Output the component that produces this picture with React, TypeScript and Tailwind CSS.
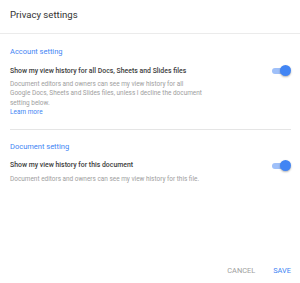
function Toggle() {
    return (
        <div className="relative w-[19px] h-[11px] flex-shrink-0">
            <div className="absolute left-0 right-[1px] top-[3px] h-[6px] rounded-full bg-[#9fc0f9]" />
            <div className="absolute right-0 top-0 w-[11px] h-[11px] rounded-full bg-[#4285f4] shadow-[0_1px_2px_rgba(0,0,0,0.3)]" />
        </div>
    );
}

interface SettingProps {
    heading: string;
    label: string;
    lines: string[];
    learnMore?: boolean;
}

function SettingSection({ heading, label, lines, learnMore }: SettingProps) {
    return (
        <div className="flex flex-col">
            <div className="text-[7.5px] leading-[10px] text-[#4285f4]">{heading}</div>
            <div className="flex items-center justify-between mt-[8px]">
                <div className="text-[6.9px] leading-[10px] font-medium text-[#3c3c3c]">{label}</div>
                <Toggle />
            </div>
            <div className="mt-[4px] text-[6.45px] leading-[9.4px] text-[#9e9e9e]">
                {lines.map((line) => (
                    <div key={line} className="whitespace-nowrap">{line}</div>
                ))}
                {learnMore && <div className="text-[#4285f4]">Learn more</div>}
            </div>
        </div>
    );
}

export default function App() {
    return (
        <div className="w-[300px] h-[283px] bg-white flex flex-col font-['Roboto',sans-serif]">
            <div className="h-[34px] border-b border-[#ebebeb] px-[10px] pt-[9px]">
                <h1 className="text-[9.6px] leading-[12px] text-[#333]">Privacy settings</h1>
            </div>
            <div className="pl-[10px] pr-[9px] pt-[13px] flex flex-col flex-1">
                <SettingSection
                    heading="Account setting"
                    label="Show my view history for all Docs, Sheets and Slides files"
                    lines={[
                        'Document editors and owners can see my view history for all',
                        'Google Docs, Sheets and Slides files, unless I decline the document',
                        'setting below.',
                    ]}
                    learnMore
                />
                <div className="h-px bg-[#e5e5e5] mt-[11px] mb-[12px]" />
                <SettingSection
                    heading="Document setting"
                    label="Show my view history for this document"
                    lines={['Document editors and owners can see my view history for this file.']}
                />
                <div className="flex-1" />
                <div className="flex justify-end items-center gap-[18px] pb-[7px] text-[7.4px] leading-[10px]">
                    <span className="text-[#9e9e9e]">CANCEL</span>
                    <span className="text-[#4285f4]">SAVE</span>
                </div>
            </div>
        </div>
    );
}
